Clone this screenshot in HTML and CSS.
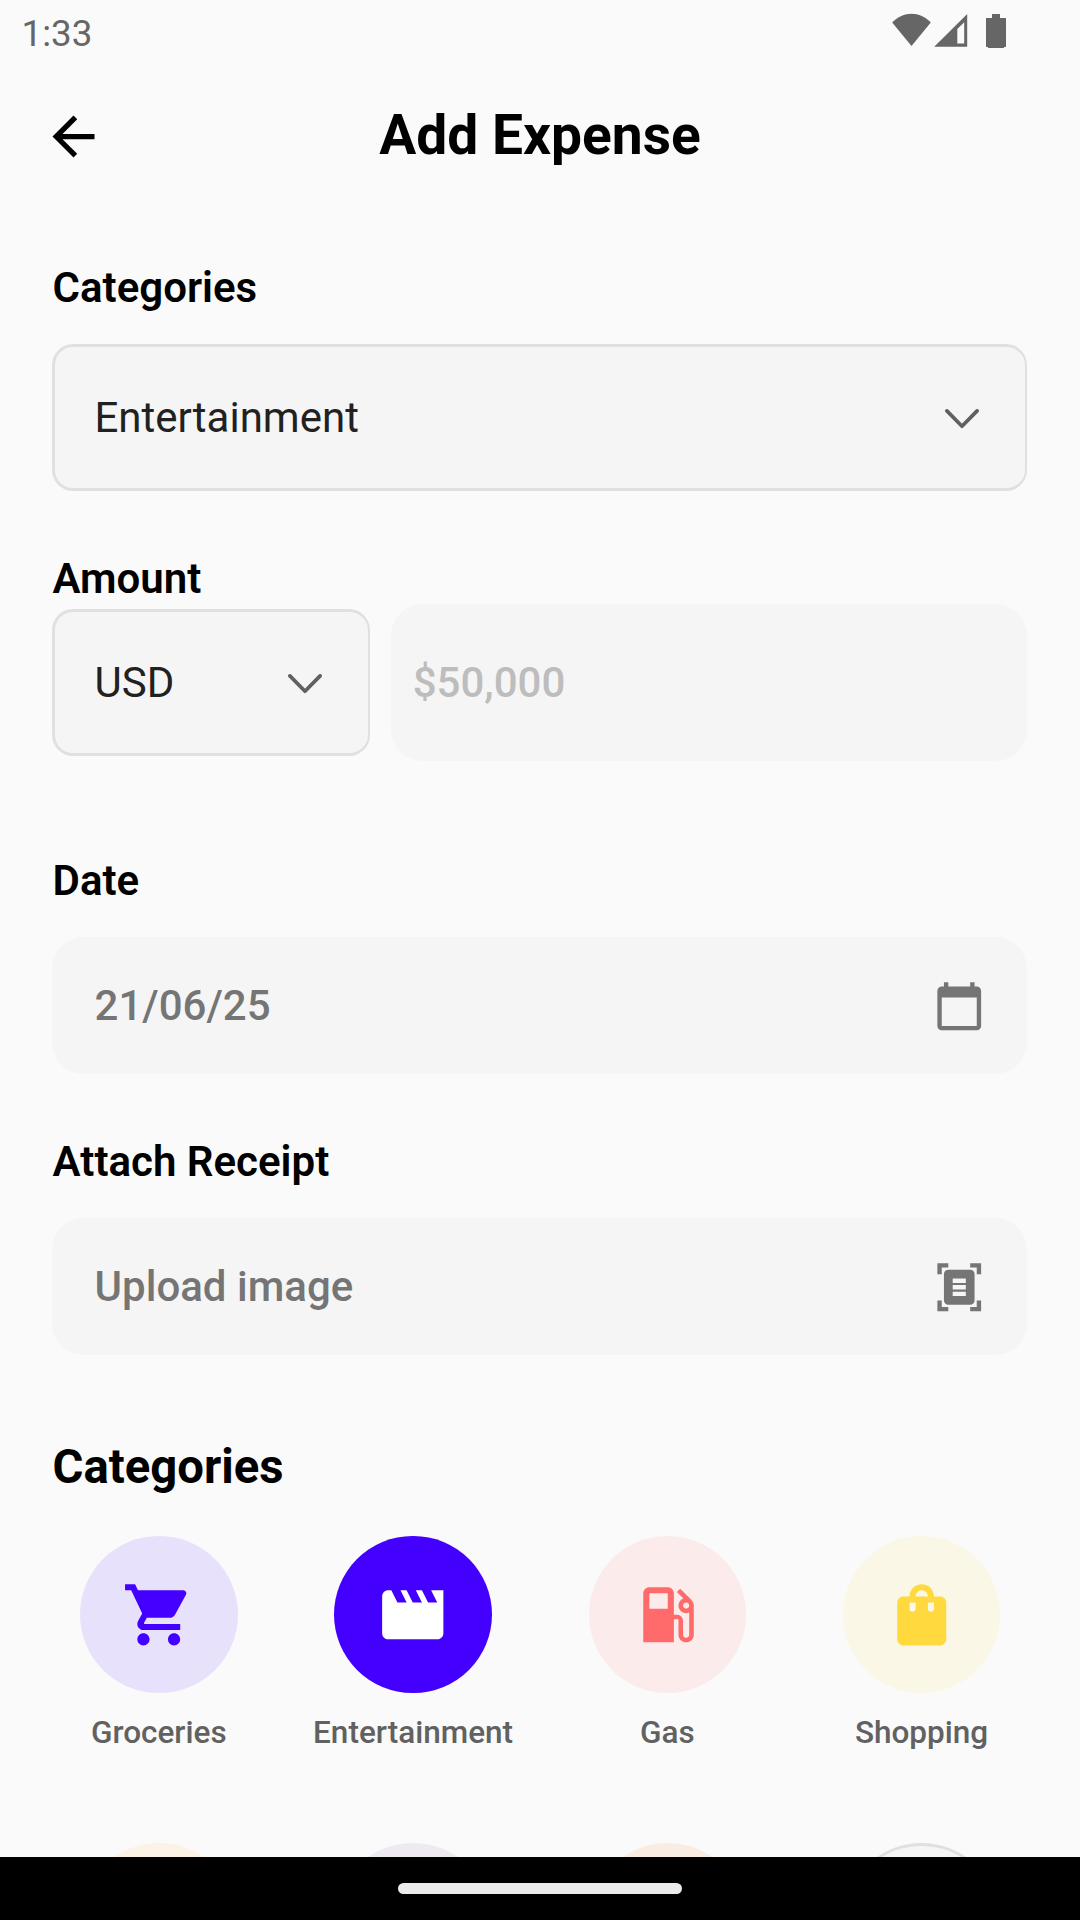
FILE: index.html
```html
<!DOCTYPE html>
<html lang="en">
<head>
<meta charset="utf-8">
<title>Add Expense</title>
<link rel="stylesheet" href="styles.css">
</head>
<body>
<div class="screen">
  <div class="status">
    <span class="clock">1:33</span>
    <svg class="status-icons" width="116" height="36" viewBox="0 0 116 36">
      <path d="M.2 9.5C11-2.300 28-2.300 38.800 9.500L19.500 33Z"/>
      <path fill-rule="evenodd" d="M75.200 1v32.700H42.200ZM72.200 9.200L65.300 16V30.500H72.200Z"/>
      <path d="M100 1h8v4h6v29h-2v1H96v-1h-2V5h6Z"/>
    </svg>
  </div>

  <header class="header">
    <svg class="back" viewBox="0 0 24 24"><path d="M20 11H7.830l5.590-5.590L12 4l-8 8 8 8 1.410-1.410L7.830 13H20z"/></svg>
    <h1 class="title">Add Expense</h1>
  </header>

  <main class="form">
    <section class="field">
      <h2 class="label">Categories</h2>
      <div class="select">
        <span>Entertainment</span>
        <svg class="chevron" viewBox="0 0 34 20"><path d="M1.900 1.900L17 17.200 32.100 1.900"/></svg>
      </div>
    </section>

    <section class="field field-amount">
      <h2 class="label">Amount</h2>
      <div class="amount-row">
        <div class="select">
          <span>USD</span>
          <svg class="chevron" viewBox="0 0 34 20"><path d="M1.900 1.900L17 17.200 32.100 1.900"/></svg>
        </div>
        <div class="amount-input">$50,000</div>
      </div>
    </section>

    <section class="field field-date">
      <h2 class="label">Date</h2>
      <div class="picker">
        <span>21/06/25</span>
        <svg class="picker-icon" viewBox="0 0 24 24"><path d="M20 3h-1V1h-2v2H7V1H5v2H4c-1.100 0-2 .9-2 2v16c0 1.100.9 2 2 2h16c1.100 0 2-.9 2-2V5c0-1.100-.9-2-2-2zm0 18H4V8h16v13z"/></svg>
      </div>
    </section>

    <section class="field field-receipt">
      <h2 class="label">Attach Receipt</h2>
      <div class="picker">
        <span>Upload image</span>
        <svg class="picker-icon" viewBox="0 0 24 24"><path d="M7 3H4v3H2V1h5v2zm15 3V1h-5v2h3v3h2zM7 21H4v-3H2v5h5v-2zm13-3v3h-3v2h5v-5h-2zm-1 0c0 1.100-.9 2-2 2H7c-1.100 0-2-.9-2-2V6c0-1.100.9-2 2-2h10c1.100 0 2 .9 2 2v12zM15 8H9v2h6V8zm0 3H9v2h6v-2zm0 3H9v2h6v-2z"/></svg>
      </div>
    </section>

    <section class="categories">
      <h2 class="section-title">Categories</h2>
      <div class="grid">
        <div class="category">
          <div class="disc groceries"><svg viewBox="0 0 24 24"><path d="M7 18c-1.100 0-1.990.9-1.990 2S5.900 22 7 22s2-.9 2-2-.9-2-2-2zM1 2v2h2l3.600 7.590-1.350 2.450c-.16.28-.25.61-.25.96 0 1.100.9 2 2 2h12v-2H7.420c-.14 0-.25-.11-.25-.25l.03-.12.9-1.630h7.450c.75 0 1.410-.41 1.750-1.030l3.580-6.490c.08-.14.12-.31.12-.48 0-.55-.45-1-1-1H5.210l-.94-2H1zm16 16c-1.100 0-1.990.9-1.990 2s.89 2 1.990 2 2-.9 2-2-.9-2-2-2z"/></svg></div>
          <span class="name">Groceries</span>
        </div>
        <div class="category">
          <div class="disc entertainment"><svg viewBox="0 0 24 24"><path d="M18 4l2 4h-3l-2-4h-2l2 4h-3l-2-4H8l2 4H7L5 4H4c-1.100 0-1.990.9-1.990 2L2 18c0 1.100.9 2 2 2h16c1.100 0 2-.9 2-2V4h-4z"/></svg></div>
          <span class="name">Entertainment</span>
        </div>
        <div class="category">
          <div class="disc gas"><svg viewBox="0 0 24 24"><path d="M19.770 7.230l.01-.01-3.720-3.720L15 4.560l2.110 2.110c-.94.36-1.610 1.260-1.610 2.330 0 1.380 1.120 2.500 2.500 2.500.36 0 .69-.08 1-.21v7.210c0 .55-.45 1-1 1s-1-.45-1-1V14c0-1.100-.9-2-2-2h-1V5c0-1.100-.9-2-2-2H6c-1.100 0-2 .9-2 2v16h10v-7.500h1.500v5c0 1.380 1.120 2.500 2.500 2.500s2.500-1.120 2.500-2.500V9c0-.69-.28-1.320-.73-1.770zM12 10H6V5h6v5zm6 0c-.55 0-1-.45-1-1s.45-1 1-1 1 .45 1 1-.45 1-1 1z"/></svg></div>
          <span class="name">Gas</span>
        </div>
        <div class="category">
          <div class="disc shopping"><svg viewBox="0 0 24 24"><path d="M18 6h-2c0-2.210-1.790-4-4-4S8 3.790 8 6H6c-1.100 0-2 .9-2 2v12c0 1.100.9 2 2 2h12c1.100 0 2-.9 2-2V8c0-1.100-.9-2-2-2zm-8 4c0 .55-.45 1-1 1s-1-.45-1-1V8h2v2zm2-6c1.100 0 2 .9 2 2h-4c0-1.100.9-2 2-2zm4 6c0 .55-.45 1-1 1s-1-.45-1-1V8h2v2z"/></svg></div>
          <span class="name">Shopping</span>
        </div>
        <div class="category"><div class="disc tint-orange"></div></div>
        <div class="category"><div class="disc tint-purple"></div></div>
        <div class="category"><div class="disc tint-peach"></div></div>
        <div class="category"><div class="disc outlined"></div></div>
      </div>
    </section>
  </main>

  <footer class="navbar"><div class="handle"></div></footer>
</div>
</body>
</html>
```

FILE: styles.css
```css
* { box-sizing: border-box; }

body {
  margin: 0;
  background: #fafafa;
  font-family: Roboto, "Liberation Sans", sans-serif;
  color: #000;
}

h1, h2 { margin: 0; }
svg { display: block; flex: none; }

.screen {
  display: flex;
  flex-direction: column;
  width: 1080px;
  height: 1920px;
  overflow: hidden;
}

.status {
  display: flex;
  justify-content: space-between;
  align-items: flex-start;
  height: 63px;
  padding: 13px 72px 0 21.500px;
  color: #666;
}
.clock { font-size: 36.75px; line-height: 42px; }
.status-icons { fill: #666; }

.header {
  display: grid;
  grid-template-columns: 63px 1fr 63px;
  align-items: center;
  height: 147px;
  padding: 0 42px;
}
.back { width: 63px; height: 63px; }
.title {
  padding-bottom: 3px;
  font-size: 55.125px;
  line-height: 68px;
  font-weight: 700;
  text-align: center;
}

.form {
  flex: 1;
  min-height: 0;
  overflow: hidden;
  padding: 52px 53px 0 52px;
}

.label {
  padding: 1px 0 0 0.600px;
  font-size: 42px;
  line-height: 50px;
  font-weight: 600;
}

.select {
  display: flex;
  justify-content: space-between;
  align-items: center;
  height: 147px;
  padding: 0 46px 0 39.500px;
  border: 3px solid #e0e0e0;
  border-right-width: 2px;
  border-radius: 21px;
  background: #f5f5f5;
  color: #212121;
  font-size: 42px;
}
.field > .select { margin-top: 31px; }
.chevron {
  width: 34px;
  height: 20px;
  margin-top: 2px;
  fill: none;
  stroke: #616161;
  stroke-width: 3.700;
  stroke-linecap: round;
  stroke-linejoin: round;
}

.field-amount { margin-top: 62px; }
.amount-row {
  display: grid;
  grid-template-columns: 318px 1fr;
  gap: 21px;
  align-items: center;
}
.amount-input {
  display: flex;
  align-items: center;
  height: 157px;
  padding: 0 21.700px;
  border-radius: 31.500px;
  background: #f5f5f5;
  color: #bdbdbd;
  font-size: 42px;
  font-weight: 500;
}

.field-date { margin-top: 94px; }
.field-receipt { margin-top: 62px; }
.picker {
  display: flex;
  justify-content: space-between;
  align-items: center;
  height: 137px;
  margin-top: 31px;
  padding: 0 42px 0 42.600px;
  border-radius: 31.500px;
  background: #f5f5f5;
  color: #757575;
  font-size: 42px;
  font-weight: 500;
}
.picker-icon {
  width: 52.500px;
  height: 52.500px;
  margin-top: 1px;
  fill: #757575;
}

.categories { margin-top: 84px; }
.section-title {
  padding-left: 0.600px;
  font-size: 47.250px;
  line-height: 56px;
  font-weight: 700;
}
.grid {
  display: grid;
  grid-template-columns: repeat(4, 212.250px);
  grid-auto-rows: 265.500px;
  column-gap: 42px;
  row-gap: 42px;
  margin: 40.500px 0 0 0.700px;
}
.category {
  display: flex;
  flex-direction: column;
  align-items: center;
}
.disc {
  display: flex;
  justify-content: center;
  align-items: center;
  width: 157.500px;
  height: 157.500px;
  border-radius: 50%;
}
.disc svg { width: 73.500px; height: 73.500px; fill: currentColor; }
.groceries { background: #e8e1fb; color: #4400ff; }
.entertainment { background: #4400ff; color: #fff; }
.gas { background: #fbebeb; color: #ff6b6b; }
.shopping { background: #fbf7e6; color: #ffd93d; }
.tint-orange { background: #fcf2e6; }
.tint-purple { background: #efeaf2; }
.tint-peach { background: #f8ece3; }
.outlined { background: #f5f5f5; border: 3px solid #e0e0e0; }
.name {
  margin-top: 20.500px;
  color: #616161;
  font-size: 31.500px;
  line-height: 37px;
  font-weight: 500;
  white-space: nowrap;
}

.navbar {
  display: flex;
  justify-content: center;
  height: 63px;
  padding-top: 26px;
  background: #000;
}
.handle {
  width: 284px;
  height: 11px;
  border-radius: 5.500px;
  background: #ebebeb;
}
```
